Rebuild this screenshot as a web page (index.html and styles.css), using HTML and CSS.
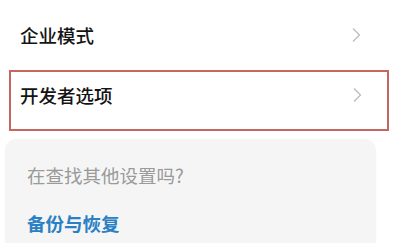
FILE: index.html
```html
<!DOCTYPE html>
<html lang="zh-CN">
  <head>
    <meta charset="UTF-8" />
    <meta name="viewport" content="width=device-width, initial-scale=1.0" />
    <title>设置</title>
    <link rel="stylesheet" href="styles.css">
  </head>
  <body>
    <!-- 设置列表 -->
    <ul class="list">
      <li class="row">
        <span class="title">企业模式</span>
        <svg class="arrow" width="10" height="16" viewBox="0 0 10 16">
          <path d="M2 1.5 L8.5 8 L2 14.5" />
        </svg>
      </li>
      <li class="row highlight">
        <span class="title">开发者选项</span>
        <svg class="arrow" width="10" height="16" viewBox="0 0 10 16">
          <path d="M2 1.5 L8.5 8 L2 14.5" />
        </svg>
      </li>
    </ul>

    <!-- 其他设置提示 -->
    <div class="card">
      <p class="hint">在查找其他设置吗?</p>
      <a class="link" href="#">备份与恢复</a>
    </div>
  </body>
</html>
```

FILE: styles.css
```css
* {
  padding: 0;
  margin: 0;
  box-sizing: border-box;
}

body {
  width: 394px;
  height: 243px;
  overflow: hidden;
  background-color: #fff;
  font-family: "Noto Sans CJK SC", "Noto Sans", sans-serif;
}

.list {
  list-style: none;
}

.list .row {
  display: flex;
  align-items: center;
  justify-content: space-between;
  height: 70px;
  padding: 0 33px 0 20px;
}

.list .row.highlight {
  height: 61px;
  margin: 0 5px 0 9px;
  padding: 0 25px 11px 9px;
  border: 2px solid #c5665f;
}

.list .row .title {
  font-size: 18.5px;
  font-weight: 500;
  color: #141414;
}

.list .row .arrow path {
  fill: none;
  stroke: #bcbcbc;
  stroke-width: 1.3;
}

.card {
  width: 371px;
  height: 104px;
  margin: 8px 0 0 5px;
  padding: 23px 22px 0;
  border-radius: 12px 12px 0 0;

  background-color: #f5f5f5;
  box-shadow: 0 0 2px rgba(0, 0, 0, 0.04);
}

.card .hint {
  line-height: 26px;
  font-size: 18.5px;
  color: #9a9a9a;
}

.card .link {
  display: block;
  margin-top: 22px;
  line-height: 26px;
  font-size: 18.5px;
  font-weight: 700;
  color: #2a80c4;
  text-decoration: none;
}
```
